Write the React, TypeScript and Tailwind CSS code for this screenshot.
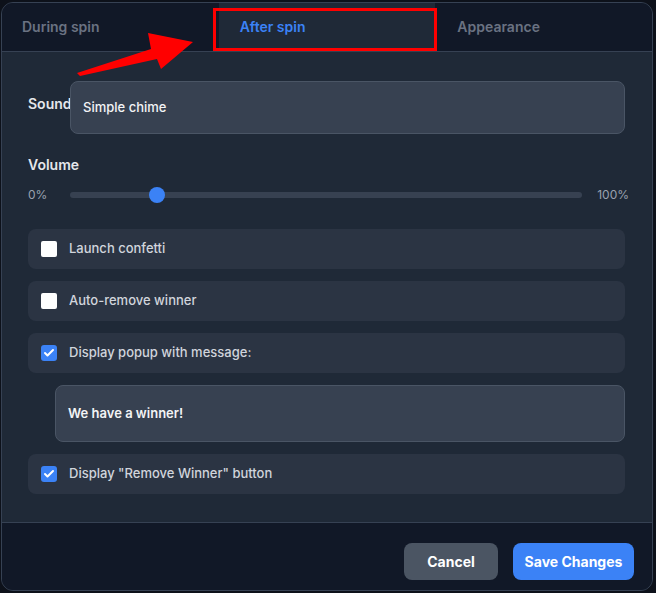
import { Check } from "lucide-react";

const tabs = ["During spin", "After spin", "Appearance"];

const options = [
  { label: "Launch confetti", checked: false },
  { label: "Auto-remove winner", checked: false },
  { label: "Display popup with message:", checked: true },
  { label: 'Display "Remove Winner" button', checked: true },
];

const CheckRow = ({ label, checked }: { label: string; checked: boolean }) => (
  <div className="flex h-[40px] items-center gap-3 rounded-lg bg-[#2b3443] pl-[13px]">
    {checked ? (
      <span className="flex h-4 w-4 items-center justify-center rounded-[3px] bg-[#3b82f6]">
        <Check className="h-3 w-3 text-white" strokeWidth={4} />
      </span>
    ) : (
      <span className="h-4 w-4 rounded-[2px] bg-white" />
    )}
    <span className="text-[13px] font-medium text-gray-300">{label}</span>
  </div>
);

export default function App() {
  const volume = 17;

  return (
    <div
      className="relative h-[593px] w-[656px] bg-[#0d111a] pl-[1px] pt-[2px]"
      style={{ fontFamily: "Inter, 'Noto Sans', sans-serif" }}
    >
      <div className="flex h-[589px] w-[652px] flex-col overflow-hidden rounded-xl border border-gray-700 bg-[#1f2937]">
        {/* Tabs */}
        <div className="grid h-[49px] shrink-0 grid-cols-3 border-b border-gray-700 bg-[#111827]">
          {tabs.map((tab, i) => (
            <div
              key={tab}
              className={
                i === 1
                  ? "flex items-center bg-[#1f2937] pl-[21px] text-sm font-semibold text-[#3b82f6]"
                  : i === 0
                    ? "flex items-center pl-[20px] text-sm font-semibold text-gray-500"
                    : "flex items-center pl-[22px] text-sm font-semibold text-gray-500"
              }
            >
              {tab}
            </div>
          ))}
        </div>

        {/* Body */}
        <div className="flex-1 pl-[26px] pr-[27px] pt-[29px]">
          <div className="flex items-center">
            <span className="mb-[7px] w-[42px] shrink-0 text-sm font-semibold text-gray-200">Sound</span>
            <div className="flex h-[53px] flex-1 items-center rounded-lg border border-gray-600 bg-[#374151] px-3 text-[13px] font-medium text-gray-100">
              Simple chime
            </div>
          </div>

          <div className="mt-[21px] text-sm font-semibold text-gray-200">Volume</div>

          <div className="-mr-1 mt-[10px] flex h-5 items-center">
            <span className="w-[42px] shrink-0 text-xs text-gray-400">0%</span>
            <div className="relative h-[6px] flex-1 rounded-full bg-[#374151]">
              <span
                className="absolute top-1/2 h-4 w-4 -translate-x-1/2 -translate-y-1/2 rounded-full bg-[#3b82f6]"
                style={{ left: `${volume}%` }}
              />
            </div>
            <span className="ml-[15px] text-xs text-gray-400">100%</span>
          </div>

          <div className="mt-[24px] flex flex-col gap-3">
            <CheckRow {...options[0]} />
            <CheckRow {...options[1]} />
            <CheckRow {...options[2]} />
            <div className="ml-[27px] flex h-[57px] items-center rounded-lg border border-gray-600 bg-[#374151] px-3 text-[13px] font-semibold text-gray-100">
              We have a winner!
            </div>
            <CheckRow {...options[3]} />
          </div>
        </div>

        {/* Footer */}
        <div className="flex h-[68px] shrink-0 justify-end gap-[15px] border-t border-gray-700 bg-[#111827] pr-[18px] pt-[20px]">
          <button className="h-[37px] w-[94px] rounded-lg bg-[#4b5563] text-sm font-bold text-white">
            Cancel
          </button>
          <button className="h-[37px] w-[121px] rounded-lg bg-[#3b82f6] text-sm font-bold text-white">
            Save Changes
          </button>
        </div>
      </div>

      {/* Annotation overlay */}
      <div className="absolute left-[213px] top-[8px] h-[43px] w-[224px] border-[3px] border-[#ff0000]" />
      <svg className="absolute left-0 top-0" width="656" height="120" viewBox="0 0 656 120">
        <polygon points="77,73 151,49 148,33 193,42 161,69 157,59 80,76" fill="#ff0000" />
      </svg>
    </div>
  );
}
